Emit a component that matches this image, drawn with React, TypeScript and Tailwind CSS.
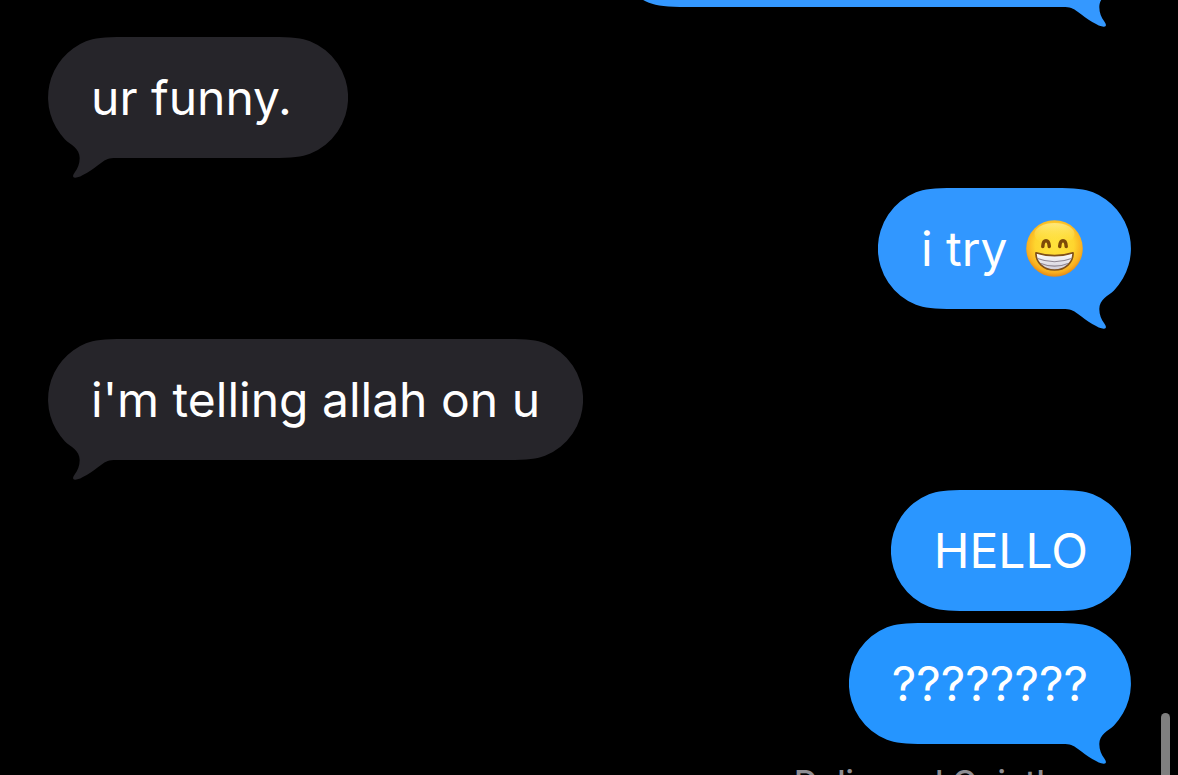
import type { ReactNode } from "react";
import clsx from "clsx";

type BubbleProps = {
  from: "me" | "them";
  color?: string;
  text?: string;
  tail?: boolean;
  className?: string;
  children?: ReactNode;
};

type BubbleEndProps = {
  side: "left" | "right";
  tail: boolean;
};

const roundEnd =
  "M0 0 C20 0 30 1.100 38 4.300 A60.500 60.500 0 0 1 38 116.700 C30 119.900 20 121 0 121 Z";

const tailEnd =
  "M0 0 C20 0 30 1.100 38 4.300 A60.500 60.500 0 0 1 59 102.400 C53.500 107.700 44.300 111 44.300 121 C44.300 127 46.500 131.500 49 135 C51.300 138 51.800 140.500 49 140.700 C44 141 32 133 23 126 C18 122 15 121 8 121 L0 121 Z";

// Rounded end of a bubble, drawn for the right side and mirrored for the left.
const BubbleEnd = ({ side, tail }: BubbleEndProps) => (
  <svg
    viewBox="0 0 76 142"
    aria-hidden="true"
    className={clsx(
      "absolute top-0 h-[142px] w-[76px]",
      side === "right" ? "right-0" : "left-0 -scale-x-100"
    )}
  >
    <path fill="currentColor" d={tail ? tailEnd : roundEnd} />
  </svg>
);

const Bubble = ({ from, color = "text-[#26252a]", text, tail = false, className, children }: BubbleProps) => (
  <li
    className={clsx(
      "relative flex h-[121px] items-center px-[43px]",
      from === "me" ? "self-end" : "self-start",
      color,
      className
    )}
  >
    <BubbleEnd side="left" tail={tail && from === "them"} />
    <BubbleEnd side="right" tail={tail && from === "me"} />
    <span className="absolute inset-x-[75px] inset-y-0 bg-current" />
    <p className="relative flex items-center whitespace-pre text-[48px] leading-[60px] text-white">
      {text}
      {children}
    </p>
  </li>
);

const GrinEmoji = () => (
  <svg viewBox="0 0 57 57" role="img" aria-label="Grinning face" className="mx-[5px] size-[57px]">
    <defs>
      <radialGradient id="face" cx="0.5" cy="0.44" r="0.57">
        <stop offset="0" stopColor="#ffe23c" />
        <stop offset="0.6" stopColor="#fed52e" />
        <stop offset="0.85" stopColor="#f9b020" />
        <stop offset="1" stopColor="#e38412" />
      </radialGradient>
      <linearGradient id="shine" x1="0" y1="0" x2="0" y2="1">
        <stop offset="0" stopColor="#fff3a0" stopOpacity="0.7" />
        <stop offset="1" stopColor="#ffe63f" stopOpacity="0" />
      </linearGradient>
      <linearGradient id="teeth" x1="0" y1="0" x2="0" y2="1">
        <stop offset="0" stopColor="#ffffff" />
        <stop offset="1" stopColor="#cfccd8" />
      </linearGradient>
    </defs>
    <circle cx="28.500" cy="28.500" r="28.300" fill="url(#face)" />
    <ellipse cx="28.500" cy="14" rx="20" ry="11" fill="url(#shine)" />
    <path
      d="M16.800 26.500 C17 22.500 18.200 20.800 20 20.800 C21.800 20.800 23 22.500 23.300 26.500 M33.700 26.500 C34 22.500 35.200 20.800 37 20.800 C38.800 20.800 40 22.500 40.200 26.500"
      fill="none"
      stroke="#7d4a08"
      strokeWidth="3.500"
      strokeLinecap="round"
    />
    <path
      d="M10 32.800 C22 36.500 35 36.500 47 32.800 C47.500 42.500 39 50 28.500 50 C18 50 9.500 42.500 10 32.800 Z"
      fill="url(#teeth)"
      stroke="#80501a"
      strokeWidth="1.700"
      strokeLinejoin="round"
    />
    <path
      d="M11.500 38.500 C22 42.500 35 42.500 45.500 38.500 M15 43.500 C23 47 34 47 42 43.500"
      fill="none"
      stroke="#8f8793"
      strokeWidth="1.200"
    />
  </svg>
);

export default function App() {
  return (
    <main className="relative h-screen overflow-hidden bg-black px-12 font-['Inter',sans-serif]">
      <ul className="-mt-[114px] -mr-px flex flex-col gap-[30px]">
        <Bubble from="me" color="text-[#3498ff]" tail className="w-[48%]" />
        <Bubble from="them" text="ur funny. " tail />
        <Bubble from="me" color="text-[#3197ff]" text="i try " tail>
          <GrinEmoji />
        </Bubble>
        <Bubble from="them" text="i'm telling allah on u" tail />
        <li>
          <ul className="flex flex-col gap-3">
            <Bubble from="me" color="text-[#2a96ff]" text="HELLO" />
            <Bubble from="me" color="text-[#2595ff]" text="????????" tail />
          </ul>
        </li>
      </ul>
      <p className="mt-[18px] pr-[66px] text-right text-[33px] leading-10 font-medium text-[#8e8d93]">
        Delivered Quietly
      </p>
      <div className="absolute top-[713px] right-2 bottom-0 w-[9px] rounded-t-full bg-[#7f7f7f]" />
    </main>
  );
}
